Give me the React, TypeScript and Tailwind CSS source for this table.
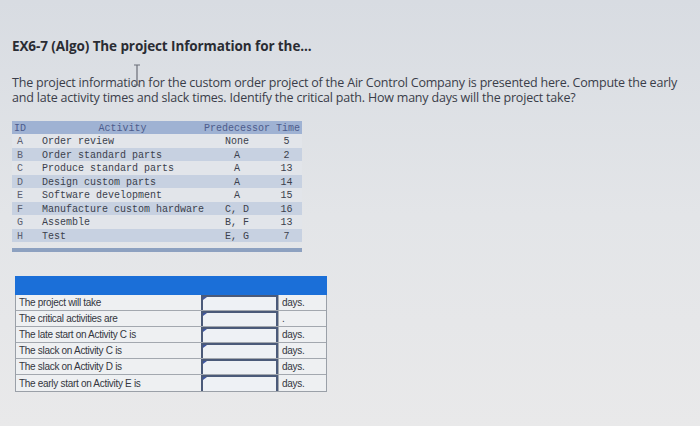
import React from 'react';

const rows = [
  { id: 'A', activity: 'Order review', pred: 'None', time: '5' },
  { id: 'B', activity: 'Order standard parts', pred: 'A', time: '2' },
  { id: 'C', activity: 'Produce standard parts', pred: 'A', time: '13' },
  { id: 'D', activity: 'Design custom parts', pred: 'A', time: '14' },
  { id: 'E', activity: 'Software development', pred: 'A', time: '15' },
  { id: 'F', activity: 'Manufacture custom hardware', pred: 'C, D', time: '16' },
  { id: 'G', activity: 'Assemble', pred: 'B, F', time: '13' },
  { id: 'H', activity: 'Test', pred: 'E, G', time: '7' },
];

const answers = [
  { label: 'The project will take', unit: 'days.' },
  { label: 'The critical activities are', unit: '.' },
  { label: 'The late start on Activity C is', unit: 'days.' },
  { label: 'The slack on Activity C is', unit: 'days.' },
  { label: 'The slack on Activity D is', unit: 'days.' },
  { label: 'The early start on Activity E is', unit: 'days.' },
];

const ActivityTable: React.FC = () => (
  <div className="w-[290px] whitespace-nowrap font-['Liberation_Mono',monospace] text-[10px] text-[#3b3f4c]">
    <div className="grid h-[13px] grid-cols-[30px_161px_68px_31px] items-center bg-[#9fb2d3] text-[#4d5c8c]">
      <span className="pl-[2px]">ID</span>
      <span className="text-center">Activity</span>
      <span className="text-center">Predecessor</span>
      <span className="text-right pr-[2px]">Time</span>
    </div>
    {rows.map((r, i) => (
      <div
        key={r.id}
        className={`grid h-[13.5px] grid-cols-[30px_161px_68px_31px] items-center ${i % 2 === 1 ? 'bg-[#c7d1e1]' : 'bg-[#e2e5ea]'}`}
      >
        <span className="pl-[5px] text-[#5b6070]">{r.id}</span>
        <span>{r.activity}</span>
        <span className="text-center">{r.pred}</span>
        <span className="text-center">{r.time}</span>
      </div>
    ))}
    <div className="mt-[6px] h-[4px] bg-[#8da1c0]" />
  </div>
);

const AnswerTable: React.FC = () => (
  <div className="w-[312px] whitespace-nowrap font-['Liberation_Sans',Arial,sans-serif] text-[10px] tracking-[-0.3px] text-[#333640]">
    <div className="h-[19px] bg-[#1b6fd8]" />
    <div className="border-l border-b border-r border-[#9aa0a8]">
      {answers.map((a) => (
        <div key={a.label} className="grid h-[16px] grid-cols-[185px_77px_1fr] border-b border-[#a3a8af] last:border-b-0">
          <span className="flex items-center bg-[#eef0f2] pl-[3px]">{a.label}</span>
          <span className="relative border-x-2 border-t-2 border-[#4b5a79] bg-[#eef1f5]">
            <span className="absolute left-0 top-0 h-0 w-0 border-l-[4px] border-b-[3px] border-l-[#3f56a0] border-b-transparent" />
          </span>
          <span className="flex items-center border-l border-[#a3a8af] bg-[#eef0f2] pl-[3px]">{a.unit}</span>
        </div>
      ))}
    </div>
  </div>
);

const App: React.FC = () => {
  return (
    <div className="relative h-[426px] w-[700px] overflow-hidden bg-gradient-to-b from-[#d8dce2] via-[#e3e5e8] to-[#e9e9ea] pl-[12px]">
      <h1 className="pt-[36px] font-['Open_Sans',sans-serif] text-[13.5px] font-bold tracking-[-0.1px] text-[#2a2c33]">
        EX6-7 (Algo) The project Information for the...
      </h1>
      <p className="mt-[19px] w-[684px] font-['Open_Sans',sans-serif] text-[12.5px] leading-[15px] tracking-[-0.2px] text-[#3a3d49]">
        The project information for the custom order project of the Air Control Company is presented here. Compute the early and late activity times and slack times. Identify the critical path. How many days will the project take?
      </p>
      <div className="mt-[16px]">
        <ActivityTable />
      </div>
      <div className="mt-[24px] pl-[3px]">
        <AnswerTable />
      </div>
      <svg className="absolute left-[132px] top-[64px]" width="10" height="22" viewBox="0 0 10 22">
        <path d="M2 1h6M5 1v20M2 21h6" stroke="#6b6e78" strokeWidth="1.2" fill="none" />
      </svg>
    </div>
  );
};

export default App;
